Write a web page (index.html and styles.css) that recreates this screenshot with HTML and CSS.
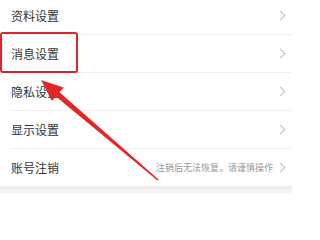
FILE: index.html
```html
<!DOCTYPE html>
<html lang="zh">
<head>
<meta charset="utf-8">
<link rel="stylesheet" href="styles.css">
</head>
<body>
<div class="page">
  <div class="list">
    <div class="row"><span class="label">资料设置</span><span class="chev"></span></div>
    <div class="row"><span class="label">消息设置</span><span class="chev"></span></div>
    <div class="row"><span class="label">隐私设置</span><span class="chev"></span></div>
    <div class="row"><span class="label">显示设置</span><span class="chev"></span></div>
    <div class="row last"><span class="label">账号注销</span><span class="right"><span class="hint">注销后无法恢复，请谨慎操作</span><span class="chev"></span></span></div>
  </div>
  <div class="band"></div>
  <div class="highlight"></div>
  <svg class="arrow" width="292" height="208" viewBox="0 0 292 208">
    <polygon points="41,80 63.6,87.5 59.5,92.2 158.5,179.4 157.5,180.6 55.9,96.4 51.9,101.1" fill="#e52626"/>
  </svg>
</div>
</body>
</html>
```

FILE: styles.css
```css
html, body {
  margin: 0;
  padding: 0;
  background: #ffffff;
}
.page {
  position: relative;
  width: 292px;
  height: 208px;
  overflow: hidden;
  font-family: "Noto Sans CJK SC", "Noto Sans", sans-serif;
}
.list {
  margin-top: -3px;
  display: flex;
  flex-direction: column;
}
.row {
  height: 37px;
  margin-left: 10px;
  padding-right: 7px;
  display: flex;
  align-items: center;
  justify-content: space-between;
  border-bottom: 1px solid #efefef;
}
.row.last {
  border-bottom: none;
}
.label {
  font-size: 12px;
  color: #333333;
  margin-left: 1px;
}
.right {
  display: flex;
  align-items: center;
  gap: 4px;
}
.hint {
  font-size: 9px;
  color: #999999;
}
.chev {
  width: 6px;
  height: 6px;
  border-top: 1px solid #bdbdbd;
  border-right: 1px solid #bdbdbd;
  transform: rotate(45deg);
  margin-right: 1px;
}
.band {
  height: 9px;
  background: linear-gradient(#eeeeee, #f3f3f3 60%, #ffffff);
}
.highlight {
  position: absolute;
  left: 0;
  top: 32px;
  width: 74px;
  height: 37px;
  border: 2px solid #d7282f;
  border-radius: 3px;
}
.arrow {
  position: absolute;
  left: 0;
  top: 0;
}
```
